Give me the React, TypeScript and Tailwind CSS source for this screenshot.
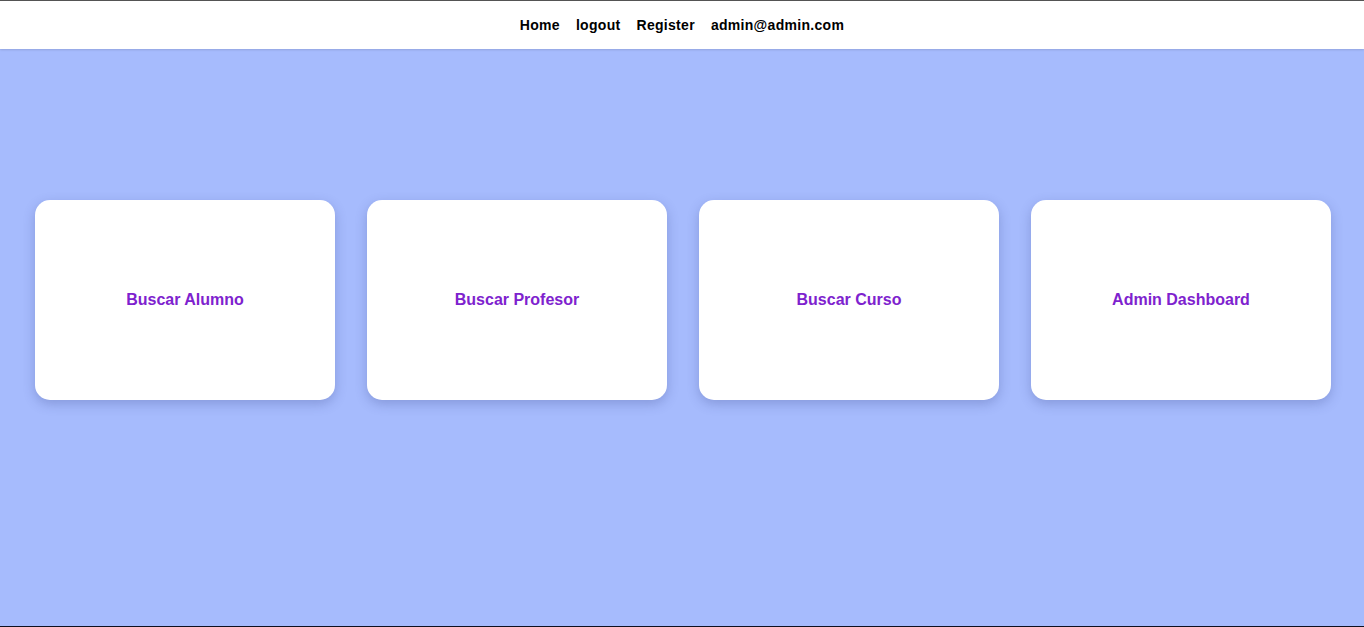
export default function App() {
  const cards = ["Buscar Alumno", "Buscar Profesor", "Buscar Curso", "Admin Dashboard"];
  const links = ["Home", "logout", "Register", "admin@admin.com"];
  return (
    <div className="h-[627px] flex flex-col bg-[#a6bbfd] font-['Liberation_Sans',Arial,sans-serif] border-t border-t-[#555555] border-b border-b-[#0d1020]">
      <nav className="h-12 bg-white flex items-center justify-center gap-4 shadow-[0_1px_2px_rgba(0,0,0,0.12)] relative z-10">
        {links.map((l) => (
          <a key={l} className="text-[14px] font-bold text-black tracking-[0.3px] cursor-pointer">
            {l}
          </a>
        ))}
      </nav>
      <main className="flex-1 flex justify-center gap-8 pt-[151px] pl-[2px]">
        {cards.map((c) => (
          <div
            key={c}
            className="w-[300px] h-[200px] bg-white rounded-[15px] flex items-center justify-center shadow-[0_4px_12px_rgba(40,50,120,0.25)]"
          >
            <span className="text-[16px] font-bold text-[#7e22ce]">{c}</span>
          </div>
        ))}
      </main>
    </div>
  );
}
